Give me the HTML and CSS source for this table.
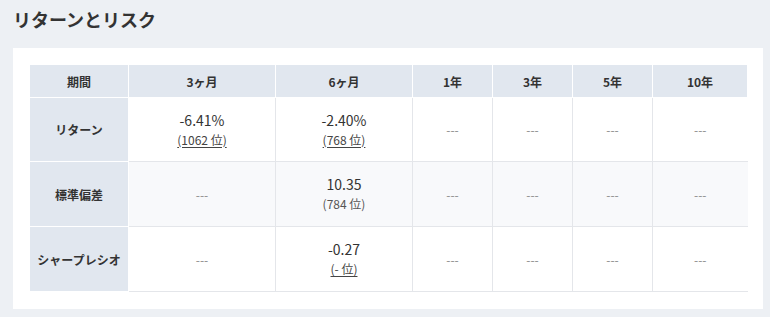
FILE: index.html
```html
<!DOCTYPE html>
<html lang="ja">
<head>
<meta charset="utf-8">
<link rel="stylesheet" href="styles.css">
</head>
<body>
<div class="page">
  <h2 class="title">リターンとリスク</h2>
  <div class="card">
    <table class="rr">
      <colgroup>
        <col class="c-label"><col class="c-3m"><col class="c-6m"><col class="c-y"><col class="c-y"><col class="c-y"><col class="c-10y">
      </colgroup>
      <thead>
        <tr>
          <th>期間</th><th>3ヶ月</th><th>6ヶ月</th><th>1年</th><th>3年</th><th>5年</th><th>10年</th>
        </tr>
      </thead>
      <tbody>
        <tr class="r1">
          <th>リターン</th>
          <td><div class="val">-6.41%</div><div class="rank"><a href="#">(1062 位)</a></div></td>
          <td><div class="val">-2.40%</div><div class="rank"><a href="#">(768 位)</a></div></td>
          <td class="na">---</td><td class="na">---</td><td class="na">---</td><td class="na">---</td>
        </tr>
        <tr class="r2">
          <th>標準偏差</th>
          <td class="na">---</td>
          <td><div class="val">10.35</div><div class="rank">(784 位)</div></td>
          <td class="na">---</td><td class="na">---</td><td class="na">---</td><td class="na">---</td>
        </tr>
        <tr class="r3">
          <th>シャープレシオ</th>
          <td class="na">---</td>
          <td><div class="val">-0.27</div><div class="rank"><a href="#">(- 位)</a></div></td>
          <td class="na">---</td><td class="na">---</td><td class="na">---</td><td class="na">---</td>
        </tr>
      </tbody>
    </table>
  </div>
</div>
</body>
</html>
```
FILE: styles.css
```css
html, body {
  margin: 0;
  padding: 0;
  background: #edf0f4;
  font-family: "Noto Sans CJK JP", "Noto Sans", sans-serif;
  color: #333;
}
.page {
  padding: 6px 7px 0 13px;
}
.title {
  margin: 0 0 16px 0;
  font-size: 18px;
  line-height: 26px;
  font-weight: 700;
  color: #333;
}
.card {
  background: #fff;
  padding: 16px 16px 17px 16px;
}
.rr {
  width: 718px;
  table-layout: fixed;
  border-collapse: collapse;
}
.c-label { width: 99px; }
.c-3m { width: 147px; }
.c-6m { width: 137px; }
.c-y { width: 80px; }
.c-10y { width: 95px; }
.rr th, .rr td {
  border: 1px solid #e4e6ea;
  padding: 0;
  text-align: center;
  vertical-align: middle;
}
.rr thead th {
  background: #e1e7ef;
  border-color: #fff;
  height: 32px;
  font-size: 12px;
  font-weight: 700;
  color: #333;
}
.rr tbody th {
  background: #e1e7ef;
  border-color: #fff;
  font-size: 12px;
  font-weight: 700;
  color: #333;
}
.rr tbody tr { height: 64px; }
.rr tbody tr.r2, .rr tbody tr.r3 { height: 65px; }
.rr tbody tr.r2 td { background: #f8f9fb; }
.rr td:last-child { border-right: none; }
.val {
  font-size: 14px;
  line-height: 20px;
  color: #333;
}
.rank {
  font-size: 12px;
  line-height: 20px;
  color: #555;
}
.rank a {
  color: #444;
  text-decoration: underline;
  text-underline-offset: 2px;
}
.na {
  font-size: 12px;
  color: #8c8c8c;
}
```
